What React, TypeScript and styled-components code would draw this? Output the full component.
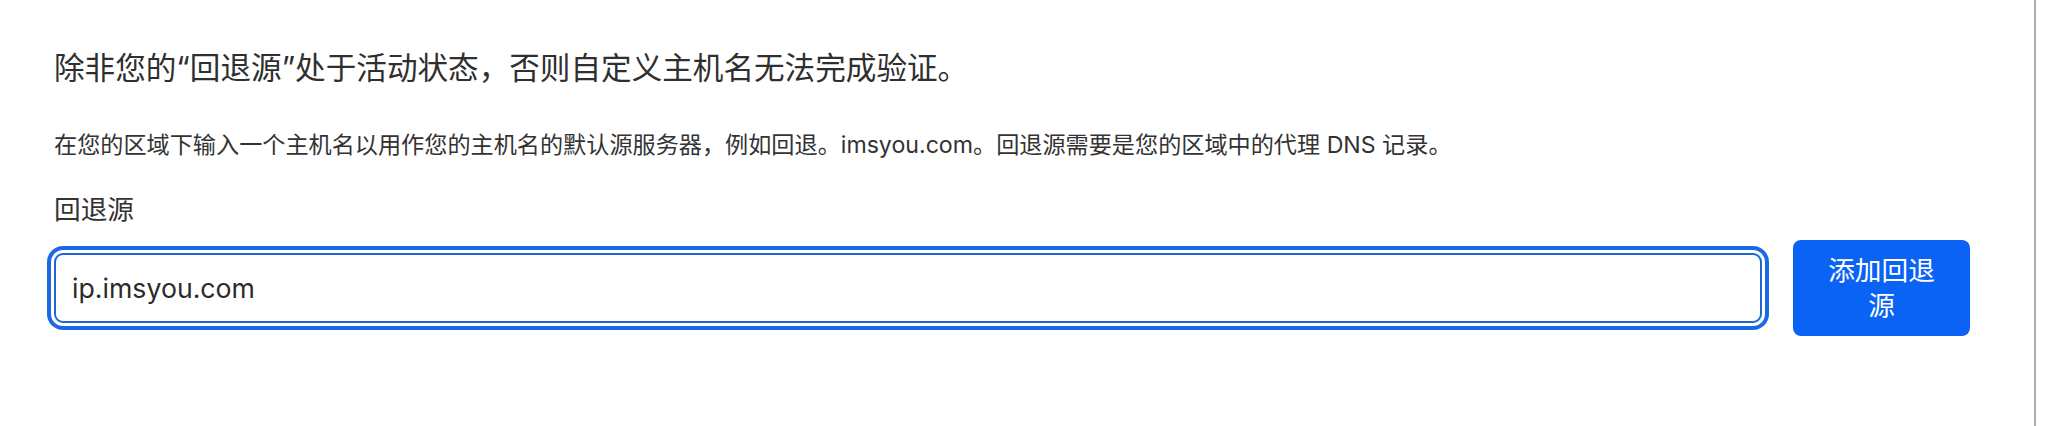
import React, { useState } from 'react';
import styled, { createGlobalStyle } from 'styled-components';

const GlobalStyle = createGlobalStyle`
  html, body {
    margin: 0;
    padding: 0;
    background: #ffffff;
  }
  body {
    font-family: Inter, "Noto Sans CJK SC", sans-serif;
    color: #313131;
  }
`;

const Panel = styled.section`
  box-sizing: border-box;
  width: 2036px;
  min-height: 100vh;
  padding: 48px 64px 0 54px;
  border-right: 2px solid #acacac;
  background: #ffffff;
`;

const Title = styled.h2`
  margin: 0;
  font-size: 30.6px;
  line-height: 40px;
  font-weight: 400;
  color: #2f2f2f;
`;

const Description = styled.p`
  margin: 41px 0 0 0;
  font-size: 23.15px;
  line-height: 32px;
  font-weight: 400;
  color: #333333;
`;

const Label = styled.label`
  display: block;
  margin-top: 31px;
  font-size: 26.7px;
  line-height: 34px;
  color: #333333;
`;

const FieldRow = styled.div`
  display: flex;
  align-items: center;
  gap: 31px;
  margin-top: 14px;
`;

const TextInput = styled.input`
  flex: 1;
  box-sizing: border-box;
  height: 70px;
  padding: 0 16px;
  border: 2px solid #1f66d4;
  border-radius: 9px;
  font-family: Inter, "Noto Sans CJK SC", sans-serif;
  font-size: 26.7px;
  color: #2b2b2b;
  background: #ffffff;
  outline: none;
  box-shadow: 0 0 0 3px #ffffff, 0 0 0 7px #1a68e6;
`;

const AddButton = styled.button`
  box-sizing: border-box;
  flex: 0 0 177px;
  width: 177px;
  height: 96px;
  padding: 0 30px;
  border: none;
  border-radius: 8px;
  background: #0b63f6;
  color: #ffffff;
  font-family: Inter, "Noto Sans CJK SC", sans-serif;
  font-size: 26.7px;
  line-height: 35px;
  text-align: center;
  cursor: pointer;
`;

const App: React.FC = () => {
  const [fallback, setFallback] = useState('ip.imsyou.com');

  return (
    <>
      <GlobalStyle />
      <Panel>
        <Title>除非您的“回退源”处于活动状态，否则自定义主机名无法完成验证。</Title>
        <Description>
          在您的区域下输入一个主机名以用作您的主机名的默认源服务器，例如回退。imsyou.com。回退源需要是您的区域中的代理 DNS 记录。
        </Description>
        <Label htmlFor="fallback-origin">回退源</Label>
        <FieldRow>
          <TextInput
            id="fallback-origin"
            type="text"
            value={fallback}
            onChange={(e) => setFallback(e.target.value)}
          />
          <AddButton type="button">添加回退源</AddButton>
        </FieldRow>
      </Panel>
    </>
  );
};

export default App;
